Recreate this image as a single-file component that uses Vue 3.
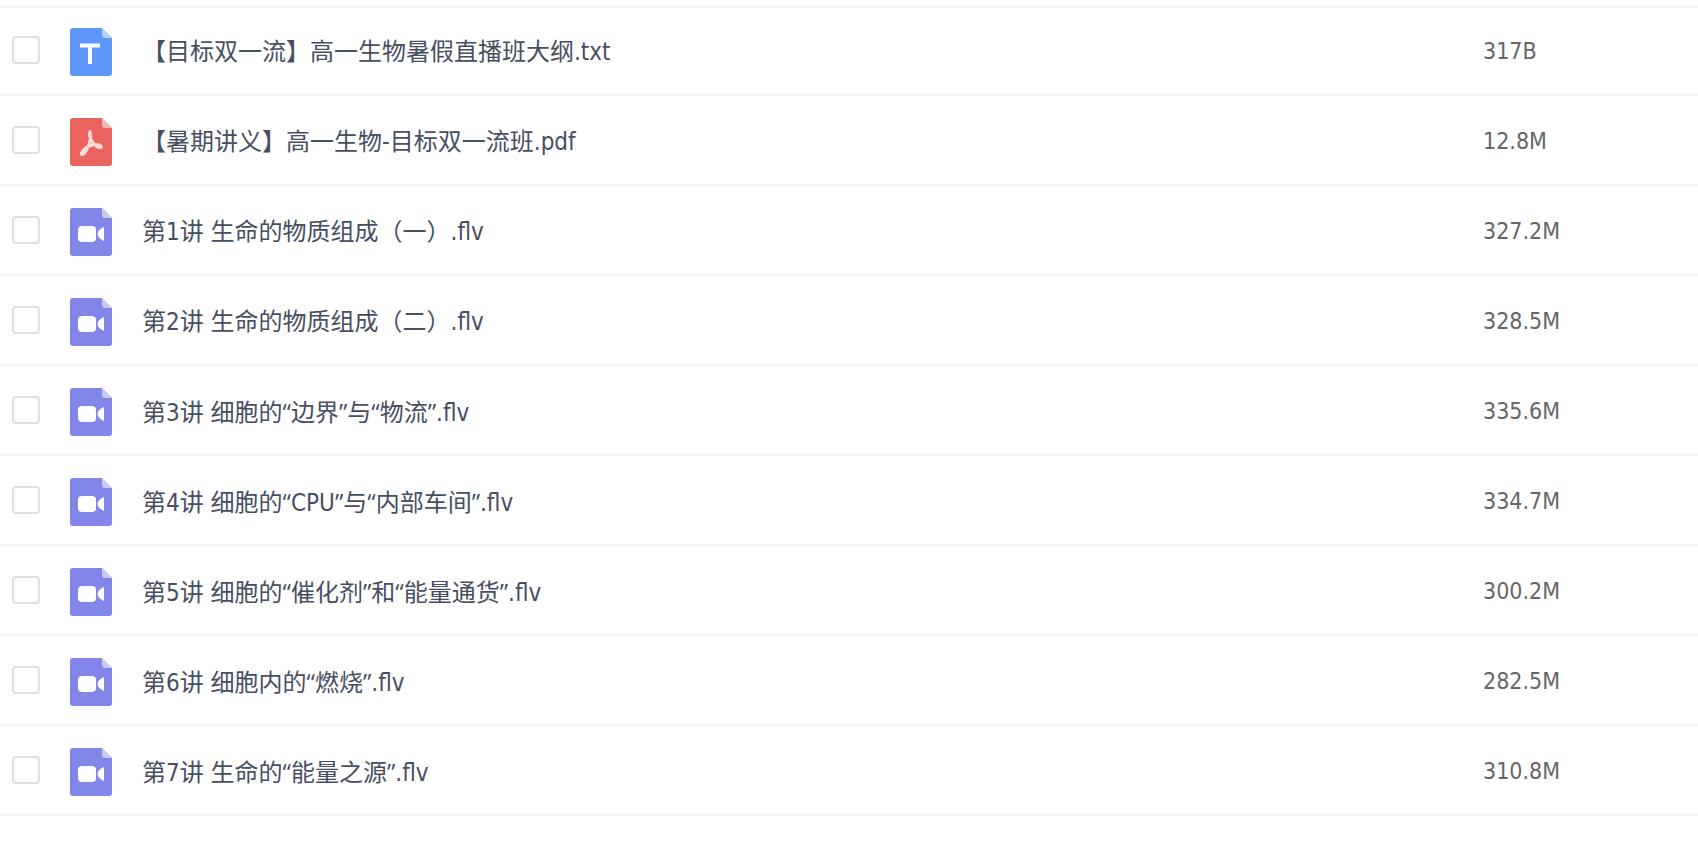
<script setup>
import { ref } from 'vue'

const selected = ref([])

const files = [
    { name: '【目标双一流】高一生物暑假直播班大纲.txt', size: '317B', type: 'txt' },
    { name: '【暑期讲义】高一生物-目标双一流班.pdf', size: '12.8M', type: 'pdf' },
    { name: '第1讲 生命的物质组成（一）.flv', size: '327.2M', type: 'video' },
    { name: '第2讲 生命的物质组成（二）.flv', size: '328.5M', type: 'video' },
    { name: '第3讲 细胞的“边界”与“物流”.flv', size: '335.6M', type: 'video' },
    { name: '第4讲 细胞的“CPU”与“内部车间”.flv', size: '334.7M', type: 'video' },
    { name: '第5讲 细胞的“催化剂”和“能量通货”.flv', size: '300.2M', type: 'video' },
    { name: '第6讲 细胞内的“燃烧”.flv', size: '282.5M', type: 'video' },
    { name: '第7讲 生命的“能量之源”.flv', size: '310.8M', type: 'video' },
]

// quotes get their own font, so they are split from the rest of the name
const parts = (name) => name.split(/([“”])/)
const isQuote = (part) => part === '“' || part === '”'
</script>


<template>
    <table class="file-list">
        <tbody>
            <tr v-for="(file, index) in files" :key="file.name">
                <td class="check">
                    <input type="checkbox" :id="'file-' + index" :value="file.name" v-model="selected">
                </td>
                <td>
                    <label class="file" :for="'file-' + index">
                        <svg class="icon" :class="file.type" viewBox="0 0 42 48" aria-hidden="true">
                            <path class="sheet" d="M3 0H32L42 10V45Q42 48 39 48H3Q0 48 0 45V3Q0 0 3 0Z" />
                            <path class="fold" d="M32 0L42 10H35Q32 10 32 7Z" />

                            <path v-if="file.type === 'txt'" class="fill" d="M10 15.500H30V19.500H22V36H18V19.500H10Z" />

                            <g v-else-if="file.type === 'pdf'" class="line">
                                <path d="M20 13.500C18.500 17 20.500 21 22.500 24C25 27.500 28 30.500 31 29.500C32.500 27.500 27 25.500 22 27C17.500 28.500 13 32 11.500 35C11 37.500 14 37 16.500 32C19 27 22 19 20 13.500Z" />
                            </g>

                            <g v-else class="fill">
                                <rect x="8" y="18" width="18" height="16" rx="4" />
                                <path d="M34 19V33Q27.500 30 27.500 26T34 19Z" />
                            </g>
                        </svg>
                        <span class="name"><span v-for="(part, i) in parts(file.name)" :key="i" :class="{ quote: isQuote(part) }">{{ part }}</span></span>
                    </label>
                </td>
                <td class="size">{{ file.size }}</td>
            </tr>
        </tbody>
    </table>
</template>


<style>
    body{
        margin: 0;
        background-color: #fff;
    }
</style>

<style scoped>
    .file-list{
        width: 100%;
        margin-top: 6px;
        border-spacing: 0;
        table-layout: fixed;
        font-family: "DejaVu Sans Condensed", "Noto Sans CJK SC", sans-serif;
        font-size: 24px;
        line-height: 32px;
        color: #474e61;
    }

    td{
        height: 88px;
        padding: 0;
        border-bottom: 2px solid #f2f4f9;
        vertical-align: middle;
    }

    tr:first-child td{
        box-shadow: inset 0 2px #f2f4f9;
    }

    .check{
        width: 70px;
    }

    input{
        appearance: none;
        display: block;
        box-sizing: border-box;
        width: 28px;
        height: 28px;
        margin: 0 0 0 12px;
        border: 2px solid #dfe0e6;
        border-radius: 4px;
        background-color: #fff;
        cursor: pointer;
    }

    input:checked{
        background-color: #5e97f6;
        border-color: #5e97f6;
    }

    .file{
        display: flex;
        align-items: center;
        gap: 30px;
        padding-top: 4px;
    }

    .icon{
        flex: none;
        width: 42px;
        height: 48px;
    }

    .name{
        white-space: nowrap;
    }

    .quote{
        font-family: "Open Sans", "Noto Sans", sans-serif;
    }

    .txt .sheet{
        fill: #5e97f8;
    }

    .pdf .sheet{
        fill: #ea635f;
    }

    .video .sheet{
        fill: #8286e9;
    }

    .fold{
        fill: #fff;
        opacity: .55;
    }

    .fill{
        fill: #fff;
    }

    .line{
        fill: none;
        stroke: #fbdcda;
        stroke-width: 3;
        stroke-linejoin: round;
    }

    .size{
        width: 215px;
        padding-top: 2px;
        height: 86px;
        font-size: 23px;
        color: #666;
    }
</style>
